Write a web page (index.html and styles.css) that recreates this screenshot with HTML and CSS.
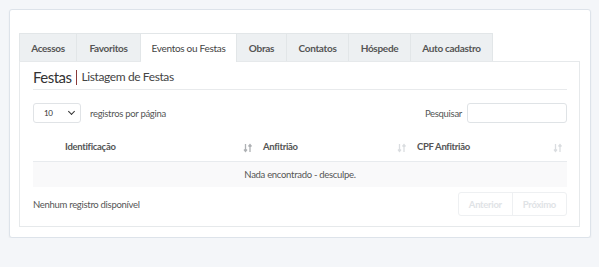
FILE: index.html
```html
<!DOCTYPE html>
<html lang="pt-BR">
<head>
  <meta charset="UTF-8">
  <title>Festas</title>
  <link rel="stylesheet" href="styles.css">
</head>
<body>

  <!-- Main card -->
  <div class="card">
    <ul class="tabs">
      <li class="tab">Acessos</li>
      <li class="tab">Favoritos</li>
      <li class="tab active">Eventos ou Festas</li>
      <li class="tab">Obras</li>
      <li class="tab">Contatos</li>
      <li class="tab">Hóspede</li>
      <li class="tab">Auto cadastro</li>
    </ul>

    <div class="tab-panel">
      <h3 class="page-title">Festas <span class="sep"></span><small>Listagem de Festas</small></h3>

      <!-- Table controls -->
      <div class="controls">
        <label class="length">
          <span class="select">10 <span class="chev"></span></span>
          registros por página
        </label>
        <label class="search">
          Pesquisar
          <span class="search-box"></span>
        </label>
      </div>

      <table class="grid">
        <thead>
          <tr>
            <th class="first">Identificação
              <svg class="sort active-sort" viewBox="0 0 10 10"><path d="M2.5 1v7M1 6.5l1.5 2 1.5-2M7 9V2M5.5 3.5l1.5-2 1.5 2"/></svg>
            </th>
            <th>Anfitrião
              <svg class="sort" viewBox="0 0 10 10"><path d="M2.5 1v7M1 6.5l1.5 2 1.5-2M7 9V2M5.5 3.5l1.5-2 1.5 2"/></svg>
            </th>
            <th>CPF Anfitrião
              <svg class="sort" viewBox="0 0 10 10"><path d="M2.5 1v7M1 6.5l1.5 2 1.5-2M7 9V2M5.5 3.5l1.5-2 1.5 2"/></svg>
            </th>
          </tr>
        </thead>
        <tbody>
          <tr>
            <td colspan="3" class="empty">Nada encontrado - desculpe.</td>
          </tr>
        </tbody>
      </table>

      <div class="footer">
        <span class="info">Nenhum registro disponível</span>
        <div class="pager">
          <span class="page-btn">Anterior</span>
          <span class="page-btn">Próximo</span>
        </div>
      </div>
    </div>
  </div>

</body>
</html>
```

FILE: styles.css
```css
/* General styling */
body {
  margin: 0;
  padding: 9px 9px 0 9px;
  background-color: #f4f6f9;
  font-family: Lato, "Open Sans", Arial, sans-serif;
  font-size: 10px;
  letter-spacing: -0.3px;
  color: #555;
}

/* Card */
.card {
  width: 582px;
  height: 229px;
  box-sizing: border-box;
  background: #fff;
  border: 1px solid #dde3ea;
  border-radius: 3px;
  box-shadow: 0 1px 2px rgba(0, 0, 0, 0.06);
  padding: 23px 10px 0 9px;
}

/* Tabs */
.tabs {
  display: flex;
  list-style: none;
  margin: 0;
  padding: 0;
}

.tab {
  height: 28px;
  box-sizing: border-box;
  display: flex;
  align-items: center;
  justify-content: center;
  background: #edf0f2;
  border: 1px solid #e2e6e8;
  border-left: none;
  border-bottom: none;
  font-weight: 700;
  font-size: 10px;
  color: #555;
}

.tab:first-child { border-left: 1px solid #e2e6e8; }
.tab:nth-child(1) { width: 58px; }
.tab:nth-child(2) { width: 64px; }
.tab:nth-child(3) { width: 96px; }
.tab:nth-child(4) { width: 50px; }
.tab:nth-child(5) { width: 62px; }
.tab:nth-child(6) { width: 62px; }
.tab:nth-child(7) { width: 82px; }

.tab.active {
  background: #fff;
  margin-bottom: -1px;
  height: 29px;
  font-weight: 400;
  color: #444;
}

/* Panel */
.tab-panel {
  height: 166px;
  box-sizing: border-box;
  border: 1px solid #e6e9eb;
  padding: 5px 12px 0 13px;
}

.page-title {
  margin: 0;
  padding-bottom: 2px;
  line-height: 20px;
  border-bottom: 1px solid #e8eaec;
  font-weight: 400;
  font-size: 15px;
  letter-spacing: -0.5px;
  color: #333;
  display: flex;
  align-items: center;
}

.page-title .sep {
  display: inline-block;
  width: 1px;
  height: 15px;
  background: #8a3a3a;
  margin: 0 5px 0 4px;
}

.page-title small {
  font-size: 12px;
  letter-spacing: -0.4px;
  color: #444;
}

/* Controls */
.controls {
  display: flex;
  justify-content: space-between;
  align-items: center;
  margin-top: 13px;
}

.length, .search {
  display: flex;
  align-items: center;
  font-size: 9.5px;
  color: #555;
}

.select {
  width: 48px;
  height: 20px;
  box-sizing: border-box;
  border: 1px solid #e0e3e6;
  border-radius: 3px;
  display: flex;
  align-items: center;
  justify-content: space-between;
  padding: 0 6px 0 10px;
  font-size: 8px;
  color: #333;
  margin-right: 9px;
}

.chev {
  width: 4px;
  height: 4px;
  border-right: 1.5px solid #333;
  border-bottom: 1.5px solid #333;
  transform: rotate(45deg);
  margin-top: -3px;
}

.search-box {
  width: 100px;
  height: 20px;
  box-sizing: border-box;
  border: 1px solid #dfe3e6;
  border-radius: 3px;
  margin-left: 5px;
}

/* Table */
.grid {
  width: 100%;
  border-collapse: collapse;
  margin-top: 8px;
}

.grid th {
  text-align: left;
  font-weight: 700;
  font-size: 9.5px;
  color: #555;
  height: 30px;
  padding: 0 6px;
  border-bottom: 1px solid #e8ebee;
  position: relative;
  vertical-align: middle;
}

.grid th.first {
  padding-left: 32px;
  width: 186px;
}

.grid th:nth-child(2) { width: 142px; }

.sort {
  position: absolute;
  right: 4px;
  top: 12px;
  width: 10px;
  height: 10px;
  fill: none;
  stroke: #dadde0;
  stroke-width: 1.3;
}

.sort.active-sort { stroke: #aeb1b4; }

.empty {
  background: #f9f9fa;
  text-align: center;
  height: 25px;
  padding: 0;
  font-size: 9.5px;
  color: #555;
}

/* Footer */
.footer {
  display: flex;
  justify-content: space-between;
  align-items: center;
  margin-top: 5px;
}

.info {
  font-size: 9.5px;
  color: #555;
}

.pager {
  display: flex;
  border: 1px solid #eef0f2;
  border-radius: 3px;
}

.page-btn {
  height: 22px;
  display: flex;
  align-items: center;
  padding: 0 10px;
  font-size: 9.5px;
  font-weight: 700;
  color: #dfe3e6;
}

.page-btn + .page-btn {
  border-left: 1px solid #eef0f2;
}
```
